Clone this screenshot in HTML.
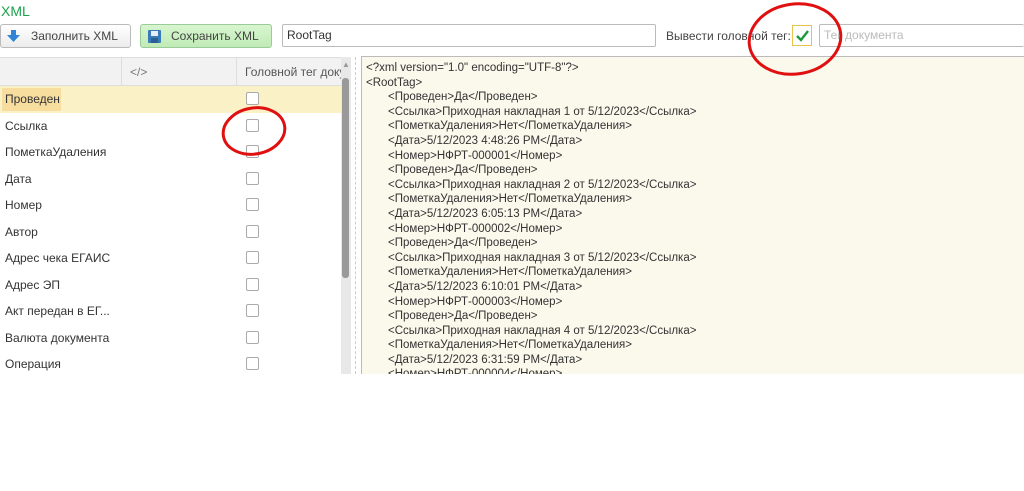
<!DOCTYPE html>
<html><head><meta charset="utf-8"><style>
*{margin:0;padding:0;box-sizing:border-box}
body{width:1024px;height:491px;background:#fff;font-family:"Liberation Sans",Arial,sans-serif;font-size:12px;color:#333;position:relative;overflow:hidden}
.a{position:absolute}
.btn{border:1px solid #bbb;border-radius:3px;background:linear-gradient(#fff,#ececec);height:24px;top:24px;line-height:22px;color:#444}
.inp{border:1px solid #bbb;border-radius:2px;background:#fff;height:23px;top:24px;line-height:21px;padding-left:4px}
.row{position:absolute;left:0;width:340px;height:26.5px;line-height:27px;padding-left:5px}
.cb{position:absolute;left:246px;width:13px;height:13px;border:1px solid #aaa;border-radius:2px;background:#fff}
.xml{position:absolute;left:366px;top:61px;font-size:11.5px;line-height:14.6px;white-space:pre;color:#333}
.xml span{padding-left:22px}
</style></head><body>
<div class="a" style="left:1px;top:3px;color:#1aa34a;font-size:14px">XML</div>
<div class="a btn" style="left:0;width:131px"><svg class="a" style="left:6px;top:5px" width="13" height="12"><path d="M4 0h5v5h4l-6.5 7L0 5h4z" fill="#2f86d6"/></svg><span class="a" style="left:30px">Заполнить XML</span></div>
<div class="a btn" style="left:140px;width:132px;background:linear-gradient(#d8f5d0,#c0ebb6);border-color:#9c9"><svg class="a" style="left:7px;top:5px" width="13" height="13"><rect width="13" height="13" rx="1" fill="#3b7ab8"/><rect x="3" y="1" width="7" height="5" fill="#e8eef5"/><rect x="3" y="8" width="7" height="5" fill="#2a5f94"/></svg><span class="a" style="left:30px">Сохранить XML</span></div>
<div class="a inp" style="left:282px;width:374px">RootTag</div>
<div class="a" style="left:666px;top:29px;color:#444">Вывести головной тег:</div>
<div class="a" style="left:792px;top:25px;width:20px;height:21px;border:1px solid #e8c24a;background:#fff"><svg width="18" height="19"><path d="M4 10l4 4 7-9" stroke="#1a9a3a" stroke-width="2.4" fill="none"/></svg></div>
<div class="a inp" style="left:819px;width:205px;color:#bbb;border-right:none">Тег документа</div>
<div class="a" style="left:0;top:57px;width:341px;height:29px;background:#f2f2f2;border-top:1px solid #ddd;border-bottom:1px solid #ddd"></div>
<div class="a" style="left:121px;top:57px;width:1px;height:29px;background:#ddd"></div>
<div class="a" style="left:236px;top:57px;width:1px;height:29px;background:#ddd"></div>
<div class="a" style="left:130px;top:65px;color:#777">&lt;/&gt;</div>
<div class="a" style="left:245px;top:65px;color:#555;width:96px;overflow:hidden;white-space:nowrap">Головной тег документа</div>
<div class="a" style="left:0;top:86px;width:341px;height:27px;background:#fbf1c7"></div>
<div class="a" style="left:2px;top:88px;width:59px;height:23px;background:#f7de9e"></div>
<div class="row" style="top:86px">Проведен</div><div class="cb" style="top:92px"></div>
<div class="row" style="top:113px">Ссылка</div><div class="cb" style="top:119px"></div>
<div class="row" style="top:139px">ПометкаУдаления</div><div class="cb" style="top:145px"></div>
<div class="row" style="top:166px">Дата</div><div class="cb" style="top:172px"></div>
<div class="row" style="top:192px">Номер</div><div class="cb" style="top:198px"></div>
<div class="row" style="top:219px">Автор</div><div class="cb" style="top:225px"></div>
<div class="row" style="top:245px">Адрес чека ЕГАИС</div><div class="cb" style="top:251px"></div>
<div class="row" style="top:272px">Адрес ЭП</div><div class="cb" style="top:278px"></div>
<div class="row" style="top:298px">Акт передан в ЕГ...</div><div class="cb" style="top:304px"></div>
<div class="row" style="top:325px">Валюта документа</div><div class="cb" style="top:331px"></div>
<div class="row" style="top:351px">Операция</div><div class="cb" style="top:357px"></div>
<div class="a" style="left:341px;top:57px;width:10px;height:317px;background:#e8e8e8"></div>
<div class="a" style="left:342px;top:78px;width:7px;height:200px;background:#999;border-radius:3px"></div>
<div class="a" style="left:342px;top:60px;color:#999;font-size:8px">▲</div>
<div class="a" style="left:355px;top:57px;width:1px;height:317px;border-left:1px dashed #ccc"></div>
<div class="a" style="left:361px;top:56px;width:663px;height:318px;background:#fbf8ec;border:1px solid #bbb;border-right:none;border-bottom:none"></div>
<div class="xml">&lt;?xml version="1.0" encoding="UTF-8"?&gt;
&lt;RootTag&gt;
<span>&lt;Проведен&gt;Да&lt;/Проведен&gt;</span>
<span>&lt;Ссылка&gt;Приходная накладная 1 от 5/12/2023&lt;/Ссылка&gt;</span>
<span>&lt;ПометкаУдаления&gt;Нет&lt;/ПометкаУдаления&gt;</span>
<span>&lt;Дата&gt;5/12/2023 4:48:26 PM&lt;/Дата&gt;</span>
<span>&lt;Номер&gt;НФРТ-000001&lt;/Номер&gt;</span>
<span>&lt;Проведен&gt;Да&lt;/Проведен&gt;</span>
<span>&lt;Ссылка&gt;Приходная накладная 2 от 5/12/2023&lt;/Ссылка&gt;</span>
<span>&lt;ПометкаУдаления&gt;Нет&lt;/ПометкаУдаления&gt;</span>
<span>&lt;Дата&gt;5/12/2023 6:05:13 PM&lt;/Дата&gt;</span>
<span>&lt;Номер&gt;НФРТ-000002&lt;/Номер&gt;</span>
<span>&lt;Проведен&gt;Да&lt;/Проведен&gt;</span>
<span>&lt;Ссылка&gt;Приходная накладная 3 от 5/12/2023&lt;/Ссылка&gt;</span>
<span>&lt;ПометкаУдаления&gt;Нет&lt;/ПометкаУдаления&gt;</span>
<span>&lt;Дата&gt;5/12/2023 6:10:01 PM&lt;/Дата&gt;</span>
<span>&lt;Номер&gt;НФРТ-000003&lt;/Номер&gt;</span>
<span>&lt;Проведен&gt;Да&lt;/Проведен&gt;</span>
<span>&lt;Ссылка&gt;Приходная накладная 4 от 5/12/2023&lt;/Ссылка&gt;</span>
<span>&lt;ПометкаУдаления&gt;Нет&lt;/ПометкаУдаления&gt;</span>
<span>&lt;Дата&gt;5/12/2023 6:31:59 PM&lt;/Дата&gt;</span>
<span>&lt;Номер&gt;НФРТ-000004&lt;/Номер&gt;</span></div>
<div class="a" style="left:0;top:374px;width:1024px;height:117px;background:#fff"></div>
<svg class="a" style="left:0;top:0" width="1024" height="491"><ellipse cx="254" cy="131" rx="31" ry="23" fill="none" stroke="#e01010" stroke-width="3" transform="rotate(-10 254 131)"/><ellipse cx="795" cy="39" rx="46" ry="35" fill="none" stroke="#e01010" stroke-width="3" transform="rotate(-8 795 39)"/></svg>
</body></html>
